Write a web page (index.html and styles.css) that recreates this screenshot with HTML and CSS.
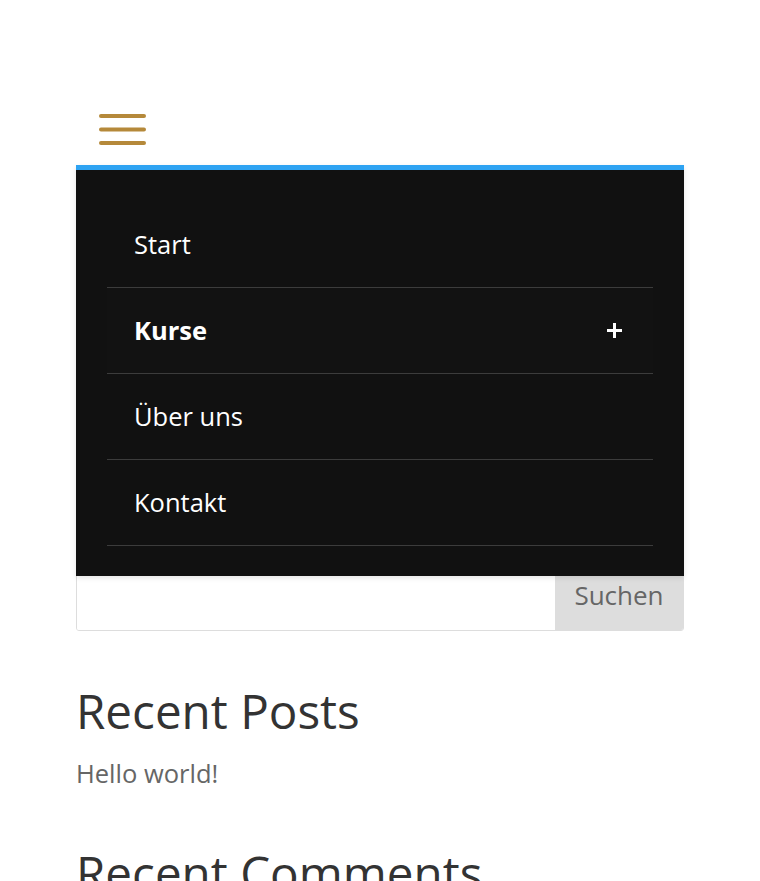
FILE: index.html
```html
<!DOCTYPE html>
<html lang="de">
<head>
  <meta charset="UTF-8" />
  <meta name="viewport" content="width=device-width, initial-scale=1.0" />
  <title>Kurse</title>
  <link rel="stylesheet" href="styles.css">
</head>
<body>
  <div class="page">
    <header class="header">
      <button class="menu-toggle" aria-label="Menü">
        <svg width="47" height="32" viewBox="0 0 47 32">
          <g stroke="#b5893a" stroke-width="4" stroke-linecap="round">
            <line x1="2" y1="2" x2="45" y2="2" />
            <line x1="2" y1="15.5" x2="45" y2="15.5" />
            <line x1="2" y1="29" x2="45" y2="29" />
          </g>
        </svg>
      </button>

      <nav class="mobile-menu">
        <ul>
          <li><a href="#">Start</a></li>
          <li class="has-children">
            <a href="#">Kurse</a>
            <svg class="plus" width="15" height="15" viewBox="0 0 15 15">
              <path d="M7.5 0v15M0 7.5h15" stroke="#fff" stroke-width="3" />
            </svg>
          </li>
          <li><a href="#">Über uns</a></li>
          <li><a href="#">Kontakt</a></li>
        </ul>
      </nav>
    </header>

    <aside class="sidebar">
      <form class="search" onsubmit="return false">
        <input type="text" class="search-field" />
        <button class="search-btn">Suchen</button>
      </form>

      <div class="widget">
        <h4>Recent Posts</h4>
        <a href="#" class="post-link">Hello world!</a>
      </div>

      <div class="widget">
        <h4>Recent Comments</h4>
      </div>
    </aside>
  </div>
</body>
</html>
```

FILE: styles.css
```css
body {
  margin: 0;
  font-family: "Open Sans", "Liberation Sans", sans-serif;
  background: #fff;
  color: #666;
}
.page {
  width: 608px;
  margin: 0 auto;
}
.header {
  position: relative;
  height: 165px;
}
.menu-toggle {
  display: block;
  margin: 0;
  padding: 0;
  border: none;
  background: none;
  position: relative;
  top: 114px;
  left: 23px;
  cursor: pointer;
}
.menu-toggle svg {
  display: block;
}
.mobile-menu {
  position: absolute;
  top: 100%;
  left: 0;
  right: 0;
  z-index: 10;
  background: #111;
  border-top: 5px solid #2ea3f2;
  box-shadow: 0 2px 5px rgba(0, 0, 0, 0.1);
  padding: 32px 31px 30px;
}
.mobile-menu ul {
  list-style: none;
  margin: 0;
  padding: 0;
}
.mobile-menu li {
  display: flex;
  align-items: center;
  justify-content: space-between;
  padding: 25px 31px 26px 27px;
  border-bottom: 1px solid #3c3c3c;
}
.mobile-menu a {
  color: #fff;
  text-decoration: none;
  font-size: 25.5px;
  line-height: 34px;
}
.mobile-menu .has-children {
  background: #121212;
}
.mobile-menu .has-children a {
  font-weight: 700;
}
.plus {
  display: block;
}
.sidebar {
  padding-top: 406px;
}
.search {
  display: flex;
  height: 60px;
  border: 1px solid #ddd;
  border-radius: 3px;
  overflow: hidden;
  box-sizing: border-box;
}
.search-field {
  flex: 1;
  border: none;
  padding: 0 10px;
  font: inherit;
  outline: none;
}
.search-btn {
  width: 128px;
  border: none;
  background: #ddd;
  color: #666;
  font-family: inherit;
  font-size: 26px;
  line-height: 34px;
  padding: 6px 0 0;
  align-self: stretch;
  display: flex;
  justify-content: center;
  align-items: flex-start;
}
.widget {
  margin-top: 52px;
}
.widget + .widget {
  margin-top: 51px;
}
.widget h4 {
  margin: 0 0 14px;
  font-size: 47.6px;
  font-weight: 400;
  line-height: 56px;
  color: #333;
}
.post-link {
  display: block;
  color: #666;
  text-decoration: none;
  font-size: 25.5px;
  line-height: 41px;
}
```
